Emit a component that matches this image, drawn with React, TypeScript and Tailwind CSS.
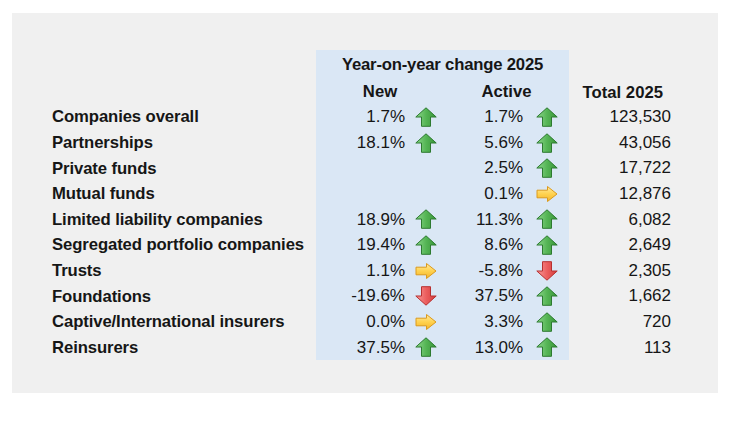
import React from "react";

type Dir = "up" | "down" | "right" | null;

function Arrow({ dir }: { dir: Dir }) {
  if (!dir) return <span className="w-[22px] h-[20px]" />;
  if (dir === "up")
    return (
      <svg width="22" height="20" viewBox="0 0 22 20">
        <defs>
          <linearGradient id="gu" x1="0" y1="0" x2="1" y2="0">
            <stop offset="0" stopColor="#8ed88e" />
            <stop offset="0.5" stopColor="#55b555" />
            <stop offset="1" stopColor="#3a963a" />
          </linearGradient>
        </defs>
        <polygon
          points="11,0.8 21.2,10 15.5,10 15.5,19.3 6.5,19.3 6.5,10 0.8,10"
          fill="url(#gu)"
          stroke="#2d7a30"
          strokeWidth="1"
          strokeLinejoin="round"
        />
      </svg>
    );
  if (dir === "down")
    return (
      <svg width="22" height="20" viewBox="0 0 22 20">
        <defs>
          <linearGradient id="gd" x1="0" y1="0" x2="1" y2="0">
            <stop offset="0" stopColor="#f79a9a" />
            <stop offset="0.5" stopColor="#ec5f5f" />
            <stop offset="1" stopColor="#d23c3c" />
          </linearGradient>
        </defs>
        <polygon
          points="6.5,0.7 15.5,0.7 15.5,10 21.2,10 11,19.2 0.8,10 6.5,10"
          fill="url(#gd)"
          stroke="#b73030"
          strokeWidth="1"
          strokeLinejoin="round"
        />
      </svg>
    );
  return (
    <svg width="22" height="20" viewBox="0 0 22 20">
      <defs>
        <linearGradient id="gr" x1="0" y1="0" x2="0" y2="1">
          <stop offset="0" stopColor="#ffeaa0" />
          <stop offset="0.5" stopColor="#ffd24f" />
          <stop offset="1" stopColor="#f4b52a" />
        </linearGradient>
      </defs>
      <polygon
        points="1,6.2 11.5,6.2 11.5,2.5 21,10 11.5,17.5 11.5,13.8 1,13.8"
        fill="url(#gr)"
        stroke="#dc9a1c"
        strokeWidth="1"
        strokeLinejoin="round"
      />
    </svg>
  );
}

const rows: {
  label: string;
  nv: string;
  nd: Dir;
  av: string;
  ad: Dir;
  total: string;
}[] = [
  { label: "Companies overall", nv: "1.7%", nd: "up", av: "1.7%", ad: "up", total: "123,530" },
  { label: "Partnerships", nv: "18.1%", nd: "up", av: "5.6%", ad: "up", total: "43,056" },
  { label: "Private funds", nv: "", nd: null, av: "2.5%", ad: "up", total: "17,722" },
  { label: "Mutual funds", nv: "", nd: null, av: "0.1%", ad: "right", total: "12,876" },
  { label: "Limited liability companies", nv: "18.9%", nd: "up", av: "11.3%", ad: "up", total: "6,082" },
  { label: "Segregated portfolio companies", nv: "19.4%", nd: "up", av: "8.6%", ad: "up", total: "2,649" },
  { label: "Trusts", nv: "1.1%", nd: "right", av: "-5.8%", ad: "down", total: "2,305" },
  { label: "Foundations", nv: "-19.6%", nd: "down", av: "37.5%", ad: "up", total: "1,662" },
  { label: "Captive/International insurers", nv: "0.0%", nd: "right", av: "3.3%", ad: "up", total: "720" },
  { label: "Reinsurers", nv: "37.5%", nd: "up", av: "13.0%", ad: "up", total: "113" },
];

export default function App() {
  return (
    <div
      className="w-[730px] h-[425px] bg-white pt-[13px] pl-[12px] text-[#161616]"
      style={{ fontFamily: '"Liberation Sans", Arial, sans-serif' }}
    >
      <div className="w-[706px] h-[380px] bg-[#f0f0f0] pt-[37px] pl-[40px]">
        <div className="flex flex-col">
          {/* title row */}
          <div className="flex h-[28.6px]">
            <div className="w-[264px]" />
            <div className="w-[253px] bg-[#dae7f5] flex items-center justify-center pt-[1px] text-[16.7px] font-bold tracking-[-0.2px]">
              Year-on-year change 2025
            </div>
            <div className="w-[102px]" />
          </div>
          {/* sub header row */}
          <div className="flex h-[25.6px] text-[16.7px] font-bold">
            <div className="w-[264px]" />
            <div className="w-[253px] bg-[#dae7f5] flex items-center">
              <div className="w-[128px] text-center">New</div>
              <div className="w-[125px] text-center">Active</div>
            </div>
            <div className="w-[102px] flex items-center justify-end pr-[8px] pt-[2px]">Total 2025</div>
          </div>
          {rows.map((r) => (
            <div key={r.label} className="flex h-[25.6px]">
              <div className="w-[264px] flex items-center text-[16.7px] font-bold whitespace-nowrap tracking-[-0.1px]">
                {r.label}
              </div>
              <div className="w-[253px] bg-[#dae7f5] flex items-center text-[17px]">
                <div className="w-[89px] text-right">{r.nv}</div>
                <div className="w-[32px] flex justify-end">
                  <Arrow dir={r.nd} />
                </div>
                <div className="w-[86px] text-right">{r.av}</div>
                <div className="w-[35px] flex justify-end">
                  <Arrow dir={r.ad} />
                </div>
              </div>
              <div className="w-[102px] flex items-center justify-end text-[17px]">{r.total}</div>
            </div>
          ))}
        </div>
      </div>
    </div>
  );
}
